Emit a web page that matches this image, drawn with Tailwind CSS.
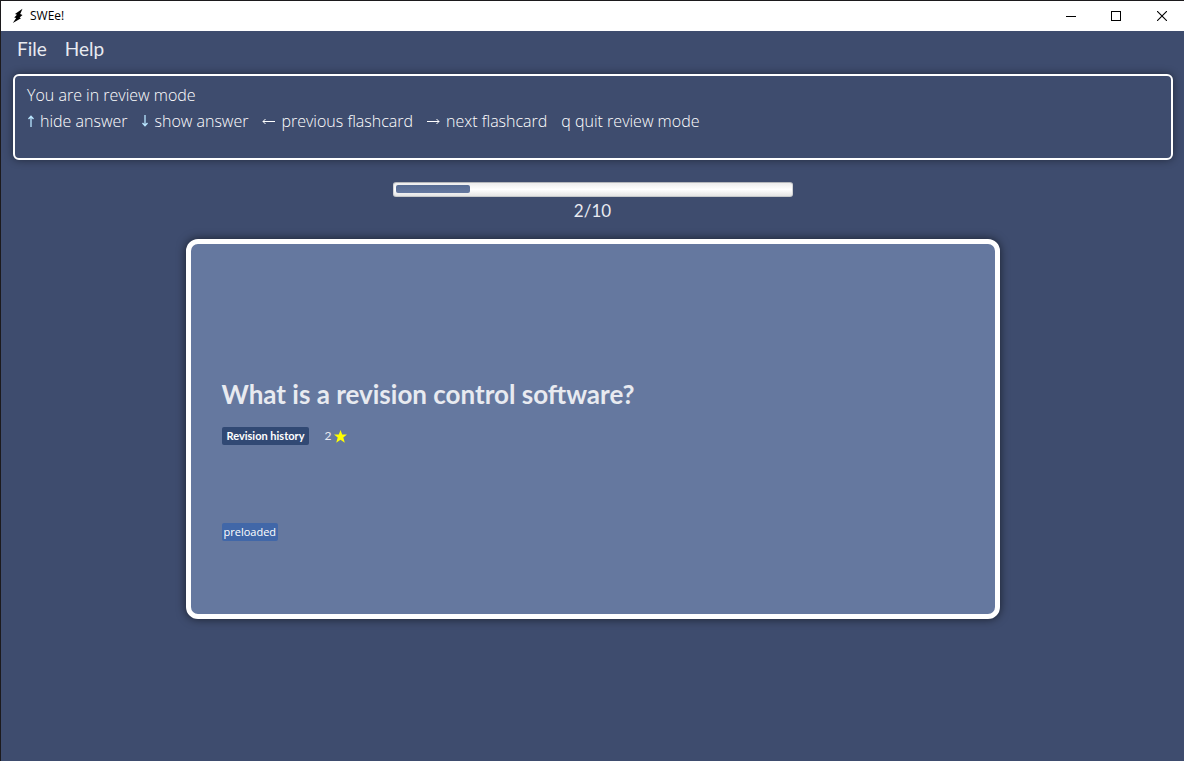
<!DOCTYPE html>
<html lang="en">
<head>
<meta charset="utf-8">
<meta name="viewport" content="width=device-width, initial-scale=1">
<title>SWEe!</title>
<script src="https://cdn.jsdelivr.net/npm/@tailwindcss/browser@4"></script>
</head>
<body class="flex min-h-screen flex-col border-t border-l border-[#1c1a1d] bg-[#3e4c6e] font-['Lato',sans-serif] text-[#e8eaf0]">
  <header class="flex h-[30px] items-center bg-white text-black">
    <svg class="ml-[10px] h-4 w-4" viewBox="0 0 16 16" fill="#000" aria-hidden="true"><path d="M11.500 .800 4 6 6 6.800 3.200 9.400 5.200 10 1.800 15 10 10.200 8.600 9.500 11.500 7 9.200 6z"/></svg>
    <h1 class="ml-[3px] flex-1 font-['Open_Sans',sans-serif] text-xs">SWEe!</h1>
    <button class="flex h-full w-[42px] items-center justify-center" aria-label="Minimize"><svg class="h-[10px] w-[10px]" viewBox="0 0 10 10" shape-rendering="crispEdges"><path d="M0 5h10v1H0z"/></svg></button>
    <button class="flex h-full w-[48px] items-center justify-center" aria-label="Maximize"><svg class="h-[10px] w-[10px]" viewBox="0 0 10 10" shape-rendering="crispEdges" fill="none" stroke="#000"><path d="M.5.5h9v9h-9z"/></svg></button>
    <button class="flex h-full w-[44px] items-center justify-center" aria-label="Close"><svg class="h-[10px] w-[10px]" viewBox="0 0 10 10" stroke="#000" stroke-width="1.1"><path d="M0 0l10 10M10 0L0 10"/></svg></button>
  </header>

  <nav class="flex h-[43px] items-start gap-[18px] px-4 pt-1 text-[19px] leading-7">
    <button>File</button>
    <button>Help</button>
  </nav>

  <section class="mr-[11px] ml-3 min-h-[86px] rounded-md border-2 border-white px-3 pt-[6px] font-['Open_Sans',sans-serif] text-base leading-[26px] font-light text-white shadow-[0_0_8px_rgba(0,0,0,0.45)]">
    <p>You are in review mode</p>
    <ul class="flex flex-wrap gap-x-[14px]">
      <li class="flex items-center gap-[5px]"><svg class="h-[12px] w-[8px]" viewBox="0 0 8 12" fill="none" stroke="#b9e6ff" stroke-width="1.3" role="img" aria-label="Up"><path d="M4 12V1M1.500 4 4 1.200 6.500 4"/></svg>hide answer</li>
      <li class="flex items-center gap-[5px]"><svg class="h-[12px] w-[8px]" viewBox="0 0 8 12" fill="none" stroke="#b9e6ff" stroke-width="1.3" role="img" aria-label="Down"><path d="M4 0v11M1.500 8 4 10.800 6.500 8"/></svg>show answer</li>
      <li class="flex items-center gap-[6px]"><svg class="h-[7px] w-[13px]" viewBox="0 0 13 7" fill="none" stroke="#fff" role="img" aria-label="Left"><path d="M13 3.500H1M3.500 1 1 3.500 3.500 6"/></svg>previous flashcard</li>
      <li class="flex items-center gap-[6px]"><svg class="h-[7px] w-[13px]" viewBox="0 0 13 7" fill="none" stroke="#fff" role="img" aria-label="Right"><path d="M0 3.500h12M9.500 1 12 3.500 9.500 6"/></svg>next flashcard</li>
      <li>q quit review mode</li>
    </ul>
  </section>

  <main class="flex flex-1 flex-col items-center px-3 pt-[22px] pb-6">
    <div class="h-[15px] w-full max-w-[400px] rounded-[3px] border border-t-[#b5b7bb] border-r-[#d0d2d4] border-b-[#c5c8ca] border-l-[#d0d2d4] bg-linear-to-b from-[#ececec] via-white to-[#e4e4e4] px-[2px] pt-[2px]" role="progressbar" aria-label="Review progress" aria-valuemin="0" aria-valuemax="10" aria-valuenow="2">
      <div class="h-2 rounded-[2px] bg-linear-to-b from-[#566b92] to-[#65789f]" style="width:19%"></div>
    </div>
    <p class="mt-[2px] text-[17px] leading-6">2/10</p>

    <article class="mt-4 flex min-h-[380px] w-full max-w-[814px] flex-col items-start rounded-xl border-5 border-white bg-[#65789f] px-[31px] pt-[134px] pb-6 shadow-[0_0_10px_rgba(0,0,0,0.6)]">
      <h2 class="text-[26px] leading-8 font-bold">What is a revision control software?</h2>
      <div class="mt-[17px] flex h-[18px] items-center gap-[15px] text-xs">
        <span class="rounded-[2px] bg-[#314974] px-[5px] text-[11px] leading-[18px] font-bold text-white">Revision history</span>
        <span class="flex items-center gap-[3px]">2
          <svg class="h-[13px] w-[13px]" viewBox="0 0 13 13" fill="#ff0" role="img" aria-label="stars"><path d="M6.500 0 8.200 4.400H13L9.300 7.600 10.800 12.800 6.500 9.800 2.200 12.800 3.700 7.600 0 4.400H4.800z"/></svg>
        </span>
      </div>
      <span class="mt-[78px] rounded-[2px] bg-[#4167a8] px-[2px] font-['Open_Sans',sans-serif] text-[11px] leading-[18px] text-white">preloaded</span>
    </article>
  </main>
</body>
</html>
